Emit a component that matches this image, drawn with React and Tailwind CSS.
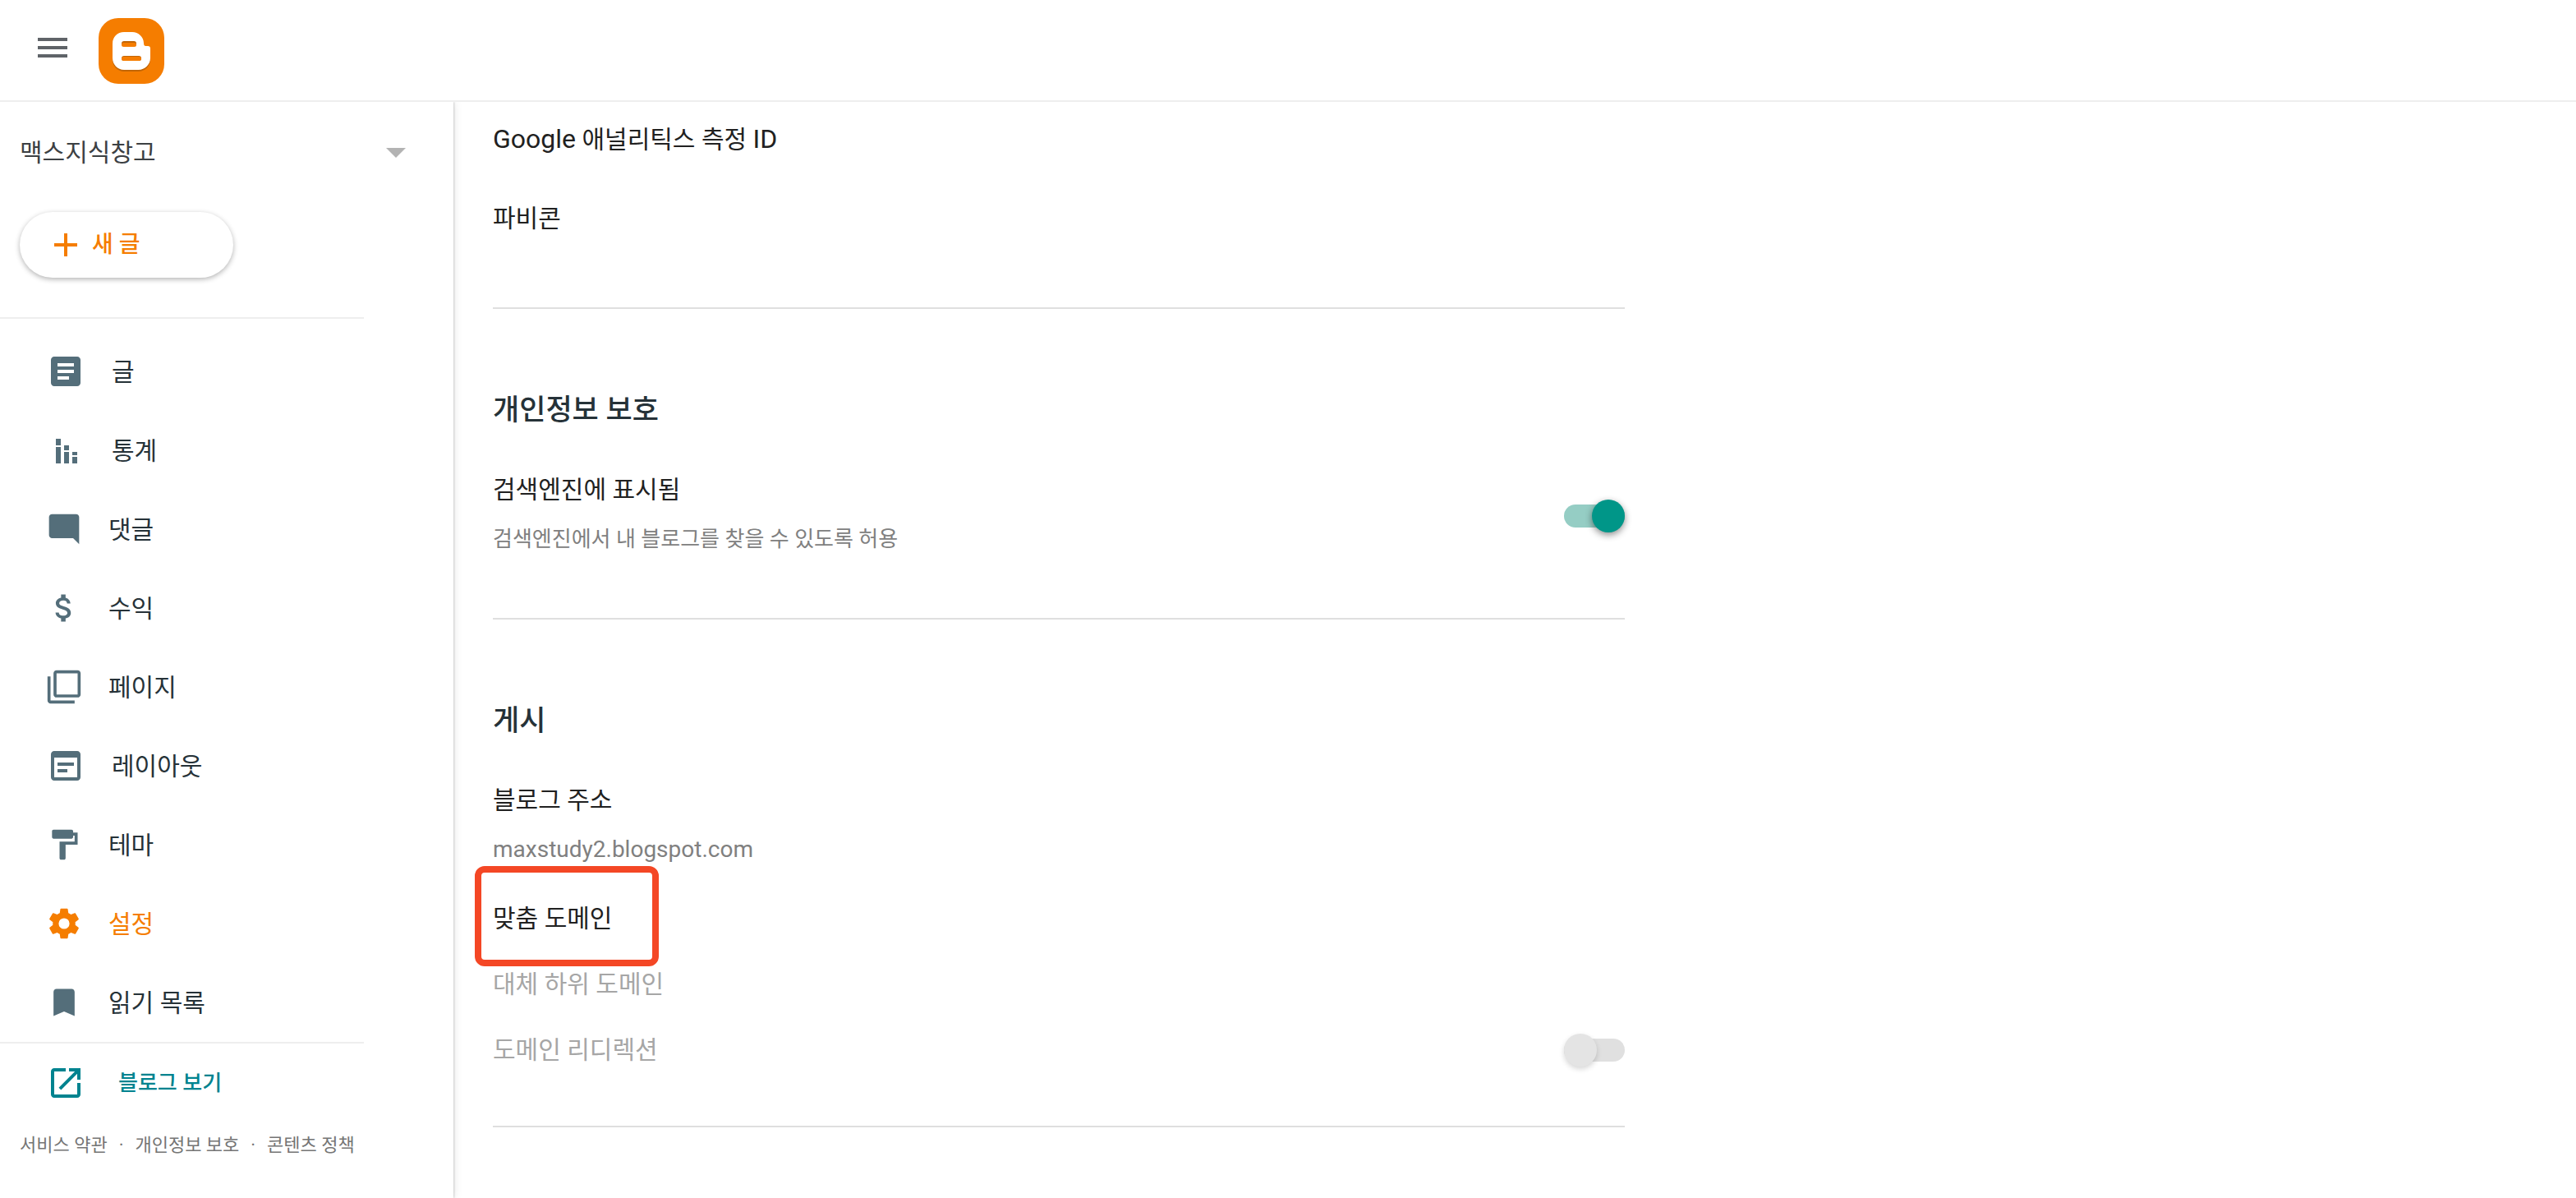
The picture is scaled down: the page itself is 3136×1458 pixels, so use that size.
const PATHS = {
  post: "M19 3H5c-1.1 0-2 .9-2 2v14c0 1.1.9 2 2 2h14c1.1 0 2-.9 2-2V5c0-1.1-.9-2-2-2zm-5 14H7v-2h7v2zm3-4H7v-2h10v2zm0-4H7V7h10v2z",
  stats: "M6 5h3v4H6zM6 10h3v10H6zM11 9h3v3h-3zM11 13h3v7h-3zM16 13h3v2h-3zM16 16h3v4h-3z",
  comment: "M22 4c0-1.1-.9-2-2-2H4c-1.1 0-2 .9-2 2v12c0 1.1.9 2 2 2h14l4 4V4z",
  money:
    "M11.8 10.9c-2.27-.59-3-1.2-3-2.15 0-1.09 1.01-1.85 2.7-1.85 1.78 0 2.44.85 2.5 2.1h2.21c-.07-1.72-1.12-3.3-3.21-3.81V3h-3v2.16c-1.94.42-3.5 1.68-3.5 3.61 0 2.31 1.91 3.46 4.7 4.13 2.5.6 3 1.48 3 2.41 0 .69-.49 1.79-2.7 1.79-2.06 0-2.87-.92-2.98-2.1h-2.2c.12 2.19 1.76 3.42 3.68 3.83V21h3v-2.15c1.95-.37 3.5-1.5 3.5-3.55 0-2.84-2.43-3.81-4.7-4.4z",
  pages:
    "M3 5H1v16c0 1.1.9 2 2 2h16v-2H3V5zm18-4H7c-1.1 0-2 .9-2 2v14c0 1.1.9 2 2 2h14c1.1 0 2-.9 2-2V3c0-1.1-.9-2-2-2zm0 16H7V3h14v14z",
  layout:
    "M19 3H5c-1.1 0-2 .9-2 2v14c0 1.1.9 2 2 2h14c1.1 0 2-.9 2-2V5c0-1.1-.9-2-2-2zm0 16H5V7h14v12zM7 10h10v2H7zM7 14h6v2H7z",
  theme:
    "M18 4V3c0-.55-.45-1-1-1H5c-.55 0-1 .45-1 1v4c0 .55.45 1 1 1h12c.55 0 1-.45 1-1V6h1v4H9v11c0 .55.45 1 1 1h2c.55 0 1-.45 1-1v-9h8V4h-3z",
  settings:
    "M19.44 12.99c.04-.32.06-.65.06-.99s-.02-.67-.07-.99l2.11-1.65c.19-.15.24-.42.12-.64l-2-3.46c-.12-.22-.38-.3-.61-.22l-2.49 1c-.52-.4-1.08-.73-1.69-.98l-.38-2.65A.49.49 0 0 0 14 2h-4c-.25 0-.46.18-.49.42l-.38 2.65c-.61.25-1.17.59-1.69.98l-2.49-1a.49.49 0 0 0-.61.22l-2 3.46c-.13.22-.07.49.12.64l2.11 1.65c-.04.32-.07.65-.07.99s.02.67.07.99l-2.11 1.65c-.19.15-.24.42-.12.64l2 3.46c.12.22.38.3.61.22l2.49-1c.52.4 1.08.73 1.69.98l.38 2.65c.03.24.24.42.49.42h4c.25 0 .46-.18.49-.42l.38-2.65c.61-.25 1.17-.59 1.69-.98l2.49 1c.23.09.49 0 .61-.22l2-3.46c.12-.22.07-.49-.12-.64l-2.11-1.65zM12 15.6A3.6 3.6 0 1 1 12 8.4a3.6 3.6 0 0 1 0 7.2z",
  bookmark: "M17 3H7c-1.1 0-2 .9-2 2v16l7-3 7 3V5c0-1.1-.9-2-2-2z",
  open: "M19 19H5V5h7V3H5c-1.11 0-2 .9-2 2v14c0 1.1.89 2 2 2h14c1.1 0 2-.9 2-2v-7h-2v7zM14 3v2h3.59l-9.83 9.83 1.41 1.41L19 6.41V10h2V3h-7z",
};

const NAV = [
  { label: "글", icon: "post", size: "size-12" },
  { label: "통계", icon: "stats", size: "size-12" },
  { label: "댓글", icon: "comment", size: "size-11" },
  { label: "수익", icon: "money", size: "size-11" },
  { label: "페이지", icon: "pages", size: "size-11" },
  { label: "레이아웃", icon: "layout", size: "size-12" },
  { label: "테마", icon: "theme", size: "size-11" },
  { label: "설정", icon: "settings", size: "size-11", active: true },
  { label: "읽기 목록", icon: "bookmark", size: "size-11" },
];

function Icon({ name, className }) {
  return (
    <svg viewBox="0 0 24 24" fill="currentColor" aria-hidden="true" className={`shrink-0 ${className}`}>
      <path d={PATHS[name]} />
    </svg>
  );
}

function BloggerLogo() {
  return (
    <svg viewBox="0 0 80 80" className="size-20" role="img" aria-label="Blogger">
      <rect width="80" height="80" rx="24" fill="#f57d00" />
      <path
        fill="#c26606"
        d="M31 19h10c7.500 0 14 6 14 13.500 0 2.500.8 3.500 2.500 3.500h2.500c2 0 3 1.200 3 3v11.500c0 8-6.500 14.500-14.500 14.500h-17.500c-8 0-14-6.500-14-14.500v-17.500c0-8 6-14 14-14z"
      />
      <path
        fill="#fff"
        d="M31 17h10c7.500 0 14 6 14 13.500 0 2.500.8 3.500 2.500 3.500h2.500c2 0 3 1.200 3 3v11.500c0 8-6.500 14.500-14.500 14.500h-17.500c-8 0-14-6.500-14-14.500v-17.500c0-8 6-14 14-14z"
      />
      <rect x="28" y="28" width="18" height="6" rx="3" fill="#c26606" />
      <rect x="28" y="30" width="18" height="5" rx="2.500" fill="#f57d00" />
      <rect x="28" y="46" width="24" height="6" rx="3" fill="#c26606" />
      <rect x="28" y="47" width="24" height="5" rx="2.500" fill="#f57d00" />
    </svg>
  );
}

function Header() {
  return (
    <header className="flex h-[124px] items-start border-b-2 border-[#eeeeee] pl-10">
      <button type="button" aria-label="메뉴" className="mt-[34px] text-[#5f6368]">
        <svg viewBox="0 0 24 24" fill="currentColor" className="size-12">
          <path d="M3 18h18v-2H3v2zm0-5h18v-2H3v2zm0-7v2h18V6H3z" />
        </svg>
      </button>
      <a href="#home" className="mt-[22px] ml-8">
        <BloggerLogo />
      </a>
    </header>
  );
}

function Sidebar() {
  return (
    <aside className="w-[552px] shrink-0 shadow-[1px_0_2px_rgba(0,0,0,0.16),2px_0_10px_rgba(0,0,0,0.08)]">
      <div className="relative mr-14 ml-6 pt-9">
        <select
          aria-label="블로그 선택"
          className="block h-[50px] w-full appearance-none bg-transparent text-[30px] text-[#3c4043]"
        >
          <option>맥스지식창고</option>
        </select>
        <svg viewBox="0 0 24 12" className="pointer-events-none absolute top-14 right-0.5 h-3 w-6 fill-[#b3b3b3]">
          <path d="M0 0h24L12 12z" />
        </svg>
      </div>
      <button
        type="button"
        className="mt-12 ml-6 flex h-20 w-[260px] items-center gap-[18px] rounded-full pl-[42px] text-[28px] font-medium text-[#f57d00] shadow-[0_2px_6px_rgba(0,0,0,0.3)]"
      >
        <svg viewBox="0 0 28 28" className="size-7 fill-current" aria-hidden="true">
          <path d="M12 0h4v12h12v4H16v12h-4V16H0v-4h12z" />
        </svg>
        새 글
      </button>
      <nav className="mt-12 mr-[109px] border-y-2 border-[#eeeeee] pt-4">
        {NAV.map(({ label, icon, size, active }) => (
          <a
            key={label}
            href={`#${icon}`}
            aria-current={active ? "page" : undefined}
            className={`flex h-24 items-center gap-8 pl-14 text-[30px] ${active ? "text-[#f57d00]" : "text-[#263238]"}`}
          >
            <Icon name={icon} className={active ? size : `${size} text-[#546e7a]`} />
            {label}
          </a>
        ))}
      </nav>
      <a href="#view" className="flex h-24 items-center gap-10 pl-14 text-[26px] font-medium text-[#00838f]">
        <Icon name="open" className="size-12" />
        블로그 보기
      </a>
      <footer className="flex h-[54px] items-center gap-3.5 pl-6 text-[22px] text-[#757575]">
        <a href="#terms">서비스 약관</a>
        <span>·</span>
        <a href="#privacy">개인정보 보호</a>
        <span>·</span>
        <a href="#content">콘텐츠 정책</a>
      </footer>
    </aside>
  );
}

function Row({ children, className = "", disabled }) {
  return (
    <button
      type="button"
      disabled={disabled}
      className={`block text-left text-[30px] leading-[48px] text-[#212121] disabled:text-[#a6a6a6] ${className}`}
    >
      {children}
    </button>
  );
}

function Switch({ id, className = "", ...rest }) {
  return (
    <input
      id={id}
      type="checkbox"
      role="switch"
      className={`relative h-7 w-[74px] shrink-0 appearance-none rounded-full bg-[#e0e0e0] before:absolute before:-top-1.5 before:left-0 before:size-10 before:rounded-full before:bg-[#e4e4e4] before:shadow-[0_3px_6px_rgba(0,0,0,0.16)] checked:bg-[#95cdc4] checked:before:left-[34px] checked:before:bg-[#009688] checked:before:shadow-[0_3px_8px_rgba(0,0,0,0.45)] ${className}`}
      {...rest}
    />
  );
}

function Section({ title, children, className }) {
  return (
    <section className={`border-b-2 border-[#dfdfdf] ${className}`}>
      {title && <h2 className="mb-12 text-[35px] leading-[48px] font-medium text-[#263238]">{title}</h2>}
      {children}
    </section>
  );
}

function Settings() {
  return (
    <main className="min-w-0 flex-1 px-12">
      <div className="max-w-[1378px]">
        <Section className="pt-[22px] pb-[84px]">
          <Row>
            <span className="text-[32px] leading-8">Google</span> 애널리틱스 측정{" "}
            <span className="text-[32px] leading-8">ID</span>
          </Row>
          <Row className="mt-12">파비콘</Row>
        </Section>

        <Section title="개인정보 보호" className="pt-[100px] pb-[78px]">
          <div className="flex items-end justify-between">
            <div>
              <label htmlFor="searchable" className="block text-[30px] leading-[48px] text-[#212121]">
                검색엔진에 표시됨
              </label>
              <p className="mt-[18px] text-[26px] leading-9 text-[#808080]">
                검색엔진에서 내 블로그를 찾을 수 있도록 허용
              </p>
            </div>
            <Switch id="searchable" className="mb-8" defaultChecked />
          </div>
        </Section>

        <Section title="게시" className="pt-[100px] pb-[68px]">
          <Row>블로그 주소</Row>
          <p className="mt-[18px] text-[28px] leading-9 text-[#808080]">maxstudy2.blogspot.com</p>
          <div className="relative mt-[42px] w-fit">
            <Row>맞춤 도메인</Row>
            <span className="pointer-events-none absolute -top-10 -left-[22px] h-[122px] w-56 rounded-xl border-8 border-[#f44725]" />
          </div>
          <Row className="mt-8" disabled>
            대체 하위 도메인
          </Row>
          <div className="mt-8 flex items-center justify-between">
            <label htmlFor="redirect" className="text-[30px] leading-[48px] text-[#a6a6a6]">
              도메인 리디렉션
            </label>
            <Switch id="redirect" disabled />
          </div>
        </Section>
      </div>
    </main>
  );
}

export default function App() {
  return (
    <div className="flex min-h-screen flex-col bg-white font-['Roboto','Noto_Sans_CJK_KR',sans-serif]">
      <Header />
      <div className="flex flex-1 overflow-hidden">
        <Sidebar />
        <Settings />
      </div>
    </div>
  );
}
